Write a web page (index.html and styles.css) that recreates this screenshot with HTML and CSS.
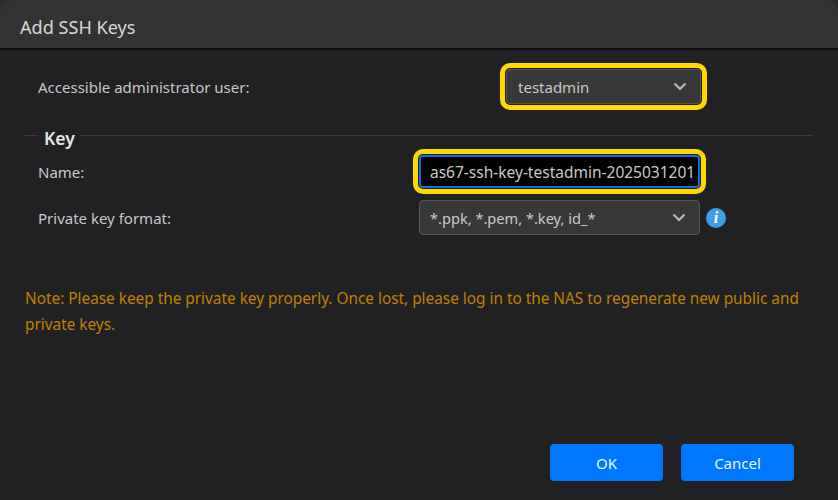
FILE: index.html
```html
<!DOCTYPE html>
<html lang="en">
<head>
<meta charset="utf-8">
<title>Add SSH Keys</title>
<link rel="stylesheet" href="styles.css">
</head>
<body>
<div class="dialog">
  <header class="title">Add SSH Keys</header>
  <main class="content">
    <div class="row row-admin">
      <span class="label">Accessible administrator user:</span>
      <div class="select select-admin marked">
        <span>testadmin</span>
        <svg class="chev" viewBox="0 0 14 9" width="14" height="9"><path d="M1.5 1.5 7 7l5.5-5.5" fill="none" stroke="#b9b9b9" stroke-width="2.2"/></svg>
      </div>
    </div>
    <div class="legend">
      <span class="legend-line short"></span>
      <span class="legend-text">Key</span>
      <span class="legend-line"></span>
    </div>
    <div class="row row-name">
      <span class="label">Name:</span>
      <div class="input marked">as67-ssh-key-testadmin-2025031201</div>
    </div>
    <div class="row row-format">
      <span class="label">Private key format:</span>
      <div class="select select-format">
        <span>*.ppk, *.pem, *.key, id_*</span>
        <svg class="chev" viewBox="0 0 14 9" width="14" height="9"><path d="M1.5 1.5 7 7l5.5-5.5" fill="none" stroke="#b9b9b9" stroke-width="2.2"/></svg>
      </div>
      <span class="info">i</span>
    </div>
    <p class="note">Note: Please keep the private key properly. Once lost, please log in to the NAS to regenerate new public and private keys.</p>
  </main>
  <footer class="actions">
    <button class="btn">OK</button>
    <button class="btn">Cancel</button>
  </footer>
</div>
</body>
</html>
```

FILE: styles.css
```css
* { box-sizing: border-box; }
html, body { margin: 0; height: 100%; background: #2b2b2b; }
body { font-family: "Noto Sans", "Open Sans", sans-serif; font-size: 15px; color: #c8c8c8; }
.dialog {
  width: 838px; height: 500px; display: flex; flex-direction: column;
  background: #212123; border-radius: 10px 10px 0 0; overflow: hidden;
}
.title {
  height: 50px; flex: none; padding: 5px 20px 0; display: flex; align-items: center;
  background: #333333; border-bottom: 2px solid #0c0c0c;
  font-size: 18.1px; color: #d8d8d8;
}
.content { flex: 1; padding: 13px 25px 0; display: flex; flex-direction: column; }
.row { display: flex; align-items: center; padding-left: 13px; }
.label { flex: none; width: 381px; }
.row-admin { height: 47px; }
.row-admin .label { width: 468px; }
.select {
  height: 35px; display: flex; align-items: center; justify-content: space-between;
  padding: 0 13px 0 11px; background: #383838; border: 1px solid #565656; border-radius: 4px;
}
.select-admin { width: 195px; }
.select-format { width: 281px; padding-left: 10px; font-size: 14.6px; }
.marked { outline: 5px solid #ffd800; outline-offset: 1px; }
.legend { display: flex; align-items: center; margin-top: 13px; height: 24px; }
.legend-line { flex: 1; height: 1px; background: #3a3a3a; }
.legend-line.short { flex: none; width: 13px; }
.legend-text { padding: 6px 6px 0; font-size: 17.5px; font-weight: 600; color: #e6e6e6; }
.row-name { height: 33px; margin-top: 8px; }
.input {
  width: 281px; height: 33px; display: flex; align-items: center; padding-left: 9px;
  background: #000; border: 2px solid #0a6fe8; border-radius: 4px; white-space: nowrap; overflow: hidden;
  font-size: 15.5px;
}
.row-format { height: 35px; margin-top: 12px; }
.info {
  width: 20px; height: 20px; margin-left: 6px; border-radius: 50%; background: #3f9ee8;
  display: flex; align-items: center; justify-content: center; flex: none;
  font: italic 700 16px "Liberation Serif", serif; color: #fff;
}
.note { margin: 50px 0 0; color: #c08000; line-height: 26px; font-size: 15.35px; }
.actions { flex: none; display: flex; justify-content: flex-end; gap: 18px; padding: 0 44px 19px 0; }
.btn {
  width: 113px; height: 37px; border: 0; border-radius: 4px; background: #0077ff;
  color: #eaf3ff; font: inherit; font-size: 15px; padding: 0;
}
```
